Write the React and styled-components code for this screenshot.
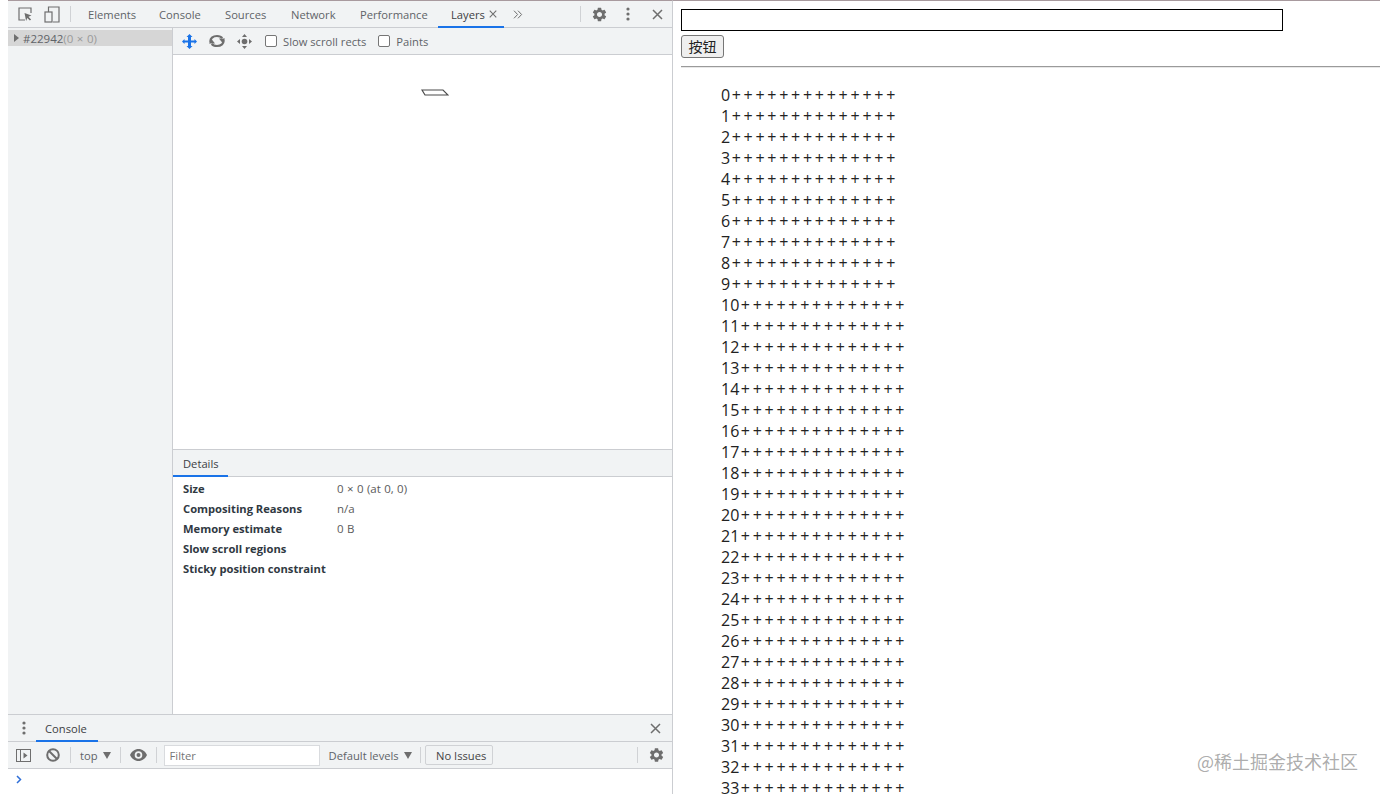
import React from "react";
import styled, { createGlobalStyle } from "styled-components";
import { MdSettings } from "react-icons/md";

const Global = createGlobalStyle`
  html, body { margin: 0; padding: 0; background: #fff; }
  body { font-family: "Open Sans", "Noto Sans", sans-serif; overflow: hidden; }
  * { box-sizing: border-box; }
`;

const Page = styled.div`
  position: relative;
  display: flex;
  width: 1380px;
  height: 794px;
  overflow: hidden;
  padding-left: 8px;
  background: #fff;
`;
const DevTools = styled.div`
  display: flex;
  flex-direction: column;
  width: 665px;
  flex: none;
  border-top: 1px solid #a89a9e;
  border-right: 1px solid #cbcdd1;
  background: #fff;
  font-size: 11.2px;
  color: #5a5a5a;
`;
const TopBar = styled.div`
  display: flex;
  align-items: center;
  height: 27px;
  flex: none;
  background: #f1f3f4;
  border-bottom: 1px solid #cbcdd1;
  padding-left: 8px;
`;
const IconSlot = styled.span`
  display: inline-flex;
  align-items: center;
  justify-content: center;
  flex: none;
  width: ${(p) => p.$w || 28}px;
  margin-left: ${(p) => p.$ml || 0}px;
  color: ${(p) => p.$color || "#6e6e6e"};
`;
const Sep = styled.span`
  flex: none;
  width: 1px;
  height: ${(p) => p.$h || 16}px;
  background: #d0d2d5;
  margin: 0 ${(p) => p.$mr ?? 6}px 0 ${(p) => p.$ml ?? 6}px;
`;
const Tab = styled.span`
  position: relative;
  display: inline-flex;
  align-items: center;
  flex: none;
  height: 100%;
  width: ${(p) => p.$w}px;
  margin-left: ${(p) => p.$ml || 0}px;
  padding-left: ${(p) => p.$pad || 0}px;
  padding-top: ${(p) => p.$pt || 0}px;
  color: ${(p) => (p.$active ? "#3c4043" : "#5f6368")};
  white-space: nowrap;
  &::after {
    content: "";
    display: ${(p) => (p.$active ? "block" : "none")};
    position: absolute;
    left: 0;
    right: 0;
    bottom: -1px;
    height: 2px;
    background: #1a73e8;
  }
`;
const Spacer = styled.span`
  flex: ${(p) => (p.$w ? `0 0 ${p.$w}px` : "1")};
`;
const Body = styled.div`
  display: flex;
  flex: 1;
  min-height: 0;
`;
const Sidebar = styled.div`
  width: 165px;
  flex: none;
  padding-top: 2px;
  background: #f1f3f4;
  border-right: 1px solid #cbcdd1;
`;
const TreeRow = styled.div`
  display: flex;
  align-items: center;
  height: 16px;
  padding-left: 6px;
  background: #d6d6d6;
  color: #5f6368;
  font-size: 11.5px;
  white-space: nowrap;
  svg { margin-right: 4px; }
`;
const Muted = styled.span`
  color: #9a9a9a;
  word-spacing: 0.6px;
`;
const Content = styled.div`
  display: flex;
  flex-direction: column;
  flex: 1;
  min-width: 0;
`;
const LayerBar = styled.div`
  display: flex;
  align-items: center;
  height: 27px;
  flex: none;
  padding-left: 2px;
  background: #f1f3f4;
  border-bottom: 1px solid #cbcdd1;
`;
const Check = styled.span`
  flex: none;
  width: 12px;
  height: 12px;
  margin-left: ${(p) => p.$ml || 0}px;
  margin-right: 6px;
  border: 1px solid #767676;
  border-radius: 2px;
  background: #fff;
`;
const CheckLabel = styled.span`
  flex: none;
  white-space: nowrap;
  color: #5f6368;
`;
const Canvas = styled.div`
  flex: 1;
  min-height: 0;
  padding: 34px 0 0 248px;
  background: #fff;
  svg { display: block; }
`;
const DetailsTabs = styled.div`
  display: flex;
  height: 28px;
  flex: none;
  background: #f1f3f4;
  border-top: 1px solid #cbcdd1;
  border-bottom: 1px solid #cbcdd1;
`;
const DetailsList = styled.div`
  display: grid;
  grid-template-columns: 154px 1fr;
  grid-auto-rows: 20px;
  align-items: center;
  height: 237px;
  flex: none;
  padding: 1px 0 0 10px;
  color: #303030;
`;
const Key = styled.span`
  font-weight: 700;
  color: #303942;
  white-space: nowrap;
`;
const Val = styled.span`
  color: #5a5a5a;
  font-size: 11.5px;
  word-spacing: 0.4px;
`;
const Drawer = styled.div`
  display: flex;
  flex-direction: column;
  flex: none;
  height: 80px;
  border-top: 1px solid #cbcdd1;
`;
const DrawerTabs = styled.div`
  display: flex;
  align-items: center;
  height: 27px;
  flex: none;
  padding-left: 3px;
  background: #f1f3f4;
  border-bottom: 1px solid #cbcdd1;
`;
const ConsoleBar = styled.div`
  display: flex;
  align-items: center;
  height: 27px;
  flex: none;
  padding-left: 1px;
  background: #f1f3f4;
  border-bottom: 1px solid #cbcdd1;
`;
const Plain = styled.span`
  flex: none;
  display: inline-flex;
  align-items: center;
  white-space: nowrap;
  color: ${(p) => p.$color || "#5f6368"};
  margin-left: ${(p) => p.$ml || 0}px;
  svg { margin-left: ${(p) => p.$gap || 5}px; }
`;
const FilterBox = styled.span`
  flex: none;
  display: flex;
  align-items: center;
  width: 156px;
  height: 21px;
  padding-left: 5px;
  background: #fff;
  border: 1px solid #d9dbde;
  color: #757575;
`;
const IssuesBtn = styled.span`
  flex: none;
  display: flex;
  align-items: center;
  justify-content: center;
  width: 68px;
  height: 20px;
  padding-left: 5px;
  border: 1px solid #d0d2d5;
  border-radius: 2px;
  color: #444;
`;
const Prompt = styled.div`
  flex: 1;
  padding: 6px 0 0 8px;
  background: #fff;
  svg { display: block; }
`;
const Site = styled.div`
  flex: 1;
  min-width: 0;
  padding: 9px 0 0 8px;
  border-top: 1px solid #a89a9e;
  color: #000;
  font-family: "Open Sans", "Noto Sans CJK SC", sans-serif;
`;
const TextInput = styled.div`
  width: 602px;
  height: 22px;
  margin-top: -1px;
  border: 1px solid #000;
  background: #fff;
`;
const PageButton = styled.button`
  display: block;
  width: 43px;
  height: 23px;
  margin-top: 4px;
  padding: 0 0 2px;
  background: #efefef;
  border: 1px solid #767676;
  border-radius: 3px;
  color: #222;
  font: 14px/1 "Noto Sans CJK SC", sans-serif;
`;
const Rule = styled.hr`
  margin: 8px 0 0;
  height: 2px;
  border: none;
  border-top: 1px solid #9a9a9a;
  border-bottom: 1px solid #e8e8e8;
`;
const List = styled.div`
  padding: 17px 0 0 40px;
`;
const Row = styled.div`
  height: 21px;
  line-height: 21px;
  font-size: 16px;
  white-space: nowrap;
  word-spacing: -1.42px;
  color: #222;
`;
const Num = styled.span`
  margin-right: 1.5px;
`;
const Watermark = styled.div`
  position: absolute;
  left: 1197px;
  top: 749px;
  font: 18px/24px "Noto Sans CJK SC", sans-serif;
  color: rgba(120, 120, 120, 0.62);
  white-space: nowrap;
`;

const Inspect = () => (
  <svg width="16" height="16" viewBox="0 0 16 16" fill="none">
    <path d="M8 14H2V2h12v5" stroke="#6e6e6e" strokeWidth="1.2" />
    <path d="M7.5 7l7 2.6-3 1.2 2.6 2.6-1.2 1.2-2.6-2.6-1.2 3z" fill="#6e6e6e" />
  </svg>
);
const Device = () => (
  <svg width="16" height="17" viewBox="0 0 16 17" fill="none" stroke="#6e6e6e" strokeWidth="1.2">
    <path d="M4.5 6V1h10.5v15H9" />
    <rect x="1" y="6" width="7" height="10" />
  </svg>
);
const Close = ({ s = 11, c = "#6e6e6e" }) => (
  <svg width={s} height={s} viewBox="0 0 11 11" stroke={c} strokeWidth="1.5">
    <path d="M1 1l9 9M10 1l-9 9" />
  </svg>
);
const Kebab = () => (
  <svg width="4" height="14" viewBox="0 0 4 14" fill="#6e6e6e">
    <circle cx="2" cy="2" r="1.6" />
    <circle cx="2" cy="7" r="1.6" />
    <circle cx="2" cy="12" r="1.6" />
  </svg>
);
const Chevrons = () => (
  <svg width="10" height="9" viewBox="0 0 10 9" fill="none" stroke="#6e6e6e" strokeWidth="1">
    <path d="M1 .7l3.6 3.8L1 8.300M5 .7l3.600 3.800L5 8.300" />
  </svg>
);
const Tri = ({ c = "#6e6e6e" }) => (
  <svg width="8" height="7" viewBox="0 0 8 7" fill={c}>
    <path d="M0 0h8L4 7z" />
  </svg>
);
const TreeTri = () => (
  <svg width="5" height="8" viewBox="0 0 5 8" fill="#6e6e6e">
    <path d="M0 0l5 4-5 4z" />
  </svg>
);
const MoveBlue = () => (
  <svg width="15" height="15" viewBox="0 0 15 15" fill="#1a73e8">
    <path d="M7.500 0l3 3H9v3.500h3.500V5l2.500 2.500L12.500 10V8.500H9V12h1.500l-3 3-3-3H6V8.500H2.500V10L0 7.500 2.500 5v1.500H6V3H4.500z" />
  </svg>
);
const Rotate = () => (
  <svg width="16" height="14" viewBox="0 0 16 14">
    <path d="M1.500 8C.8 4.500 4 2 8 2c2.500 0 4.300.8 5.200 2.200" fill="none" stroke="#6e6e6e" strokeWidth="2.200" />
    <path d="M10 4.500h6L13.500 9z" fill="#6e6e6e" />
    <path d="M14.500 6C15.200 9.500 12 12 8 12c-2.500 0-4.300-.8-5.200-2.200" fill="none" stroke="#6e6e6e" strokeWidth="2.200" />
    <path d="M6 9.500H0L2.500 5z" fill="#6e6e6e" />
  </svg>
);
const Pan = () => (
  <svg width="15" height="15" viewBox="0 0 15 15" fill="#6e6e6e">
    <path d="M7.500 0l2.500 3H5zM7.500 15L5 12h5zM0 7.500L3 5v5zM15 7.500L12 10V5z" />
    <circle cx="7.500" cy="7.500" r="2.800" />
  </svg>
);
const SidebarToggle = () => (
  <svg width="15" height="13" viewBox="0 0 15 13" fill="none" stroke="#6e6e6e">
    <rect x=".5" y=".5" width="14" height="12" />
    <path d="M4.500 .5v12" />
    <path d="M7.500 3.500l4 3-4 3z" fill="#6e6e6e" stroke="none" />
  </svg>
);
const Block = () => (
  <svg width="14" height="14" viewBox="0 0 14 14" fill="none" stroke="#6e6e6e" strokeWidth="2">
    <circle cx="7" cy="7" r="5.800" />
    <path d="M3 3l8 8" />
  </svg>
);
const Eye = () => (
  <svg width="17" height="12" viewBox="0 0 17 12" fill="#6e6e6e">
    <path d="M8.500 0C4.800 0 1.600 2.400 0 6c1.600 3.600 4.800 6 8.500 6S15.400 9.600 17 6C15.400 2.400 12.200 0 8.500 0zm0 9.800a3.800 3.800 0 110-7.600 3.800 3.800 0 010 7.600zM8.500 4a2 2 0 100 4 2 2 0 000-4z" />
  </svg>
);
const PromptIcon = () => (
  <svg width="6" height="9" viewBox="0 0 6 9" fill="none" stroke="#2f6fd8" strokeWidth="1.500">
    <path d="M1 1l3.500 3.500L1 8" />
  </svg>
);
const LayerShape = () => (
  <svg width="28" height="8" viewBox="0 0 28 8" fill="#fff" stroke="#4a4a4a" strokeWidth="1.200">
    <path d="M1 1h21l5 5H4z" />
  </svg>
);

const details = [
  ["Size", "0 × 0 (at 0, 0)"],
  ["Compositing Reasons", "n/a"],
  ["Memory estimate", "0 B"],
  ["Slow scroll regions", ""],
  ["Sticky position constraint", ""],
];
const pluses = Array(14).fill("+").join(" ");
const rows = Array.from({ length: 34 }, (_, i) => i);

export default function App() {
  return (
    <Page>
      <Global />
      <DevTools>
        <TopBar>
          <IconSlot $w={16} $ml={1}><Inspect /></IconSlot>
          <IconSlot $w={16} $ml={11}><Device /></IconSlot>
          <Sep $ml={10} $mr={17} />
          <Tab $w={71}>Elements</Tab>
          <Tab $w={66}>Console</Tab>
          <Tab $w={66}>Sources</Tab>
          <Tab $w={69}>Network</Tab>
          <Tab $w={78}>Performance</Tab>
          <Tab $w={66} $active $pad={13}>
            Layers
            <IconSlot $w={9} $ml={4}><Close s={8} /></IconSlot>
          </Tab>
          <IconSlot $w={10} $ml={9}><Chevrons /></IconSlot>
          <Spacer />
          <Sep $ml={0} $mr={10} />
          <IconSlot $w={17}><MdSettings size={19} color="#6e6e6e" /></IconSlot>
          <IconSlot $w={4} $ml={18}><Kebab /></IconSlot>
          <IconSlot $w={11} $ml={22}><Close /></IconSlot>
          <Spacer $w={9} />
        </TopBar>
        <Body>
          <Sidebar>
            <TreeRow>
              <TreeTri />
              #22942<Muted>(0 × 0)</Muted>
            </TreeRow>
          </Sidebar>
          <Content>
            <LayerBar>
              <IconSlot $w={28}><MoveBlue /></IconSlot>
              <IconSlot $w={28}><Rotate /></IconSlot>
              <IconSlot $w={26}><Pan /></IconSlot>
              <Check $ml={8} />
              <CheckLabel>Slow scroll rects</CheckLabel>
              <Check $ml={12} />
              <CheckLabel>Paints</CheckLabel>
            </LayerBar>
            <Canvas><LayerShape /></Canvas>
            <DetailsTabs>
              <Tab $w={55} $active $pad={10} $pt={1}>Details</Tab>
            </DetailsTabs>
            <DetailsList>
              {details.map(([k, v]) => (
                <React.Fragment key={k}>
                  <Key>{k}</Key>
                  <Val>{v}</Val>
                </React.Fragment>
              ))}
            </DetailsList>
          </Content>
        </Body>
        <Drawer>
          <DrawerTabs>
            <IconSlot $w={4} $ml={11}><Kebab /></IconSlot>
            <Tab $w={62} $active $pad={9} $ml={10}>Console</Tab>
            <Spacer />
            <IconSlot $w={11}><Close /></IconSlot>
            <Spacer $w={11} />
          </DrawerTabs>
          <ConsoleBar>
            <IconSlot $w={15} $ml={7}><SidebarToggle /></IconSlot>
            <IconSlot $w={14} $ml={15}><Block /></IconSlot>
            <Sep $ml={10} $mr={9} />
            <Plain $gap={5}>top<Tri /></Plain>
            <Sep $ml={9} $mr={9} />
            <IconSlot $w={17}><Eye /></IconSlot>
            <Sep $ml={9} $mr={7} />
            <FilterBox>Filter</FilterBox>
            <Plain $ml={9} $gap={5}>Default levels<Tri /></Plain>
            <Sep $ml={8} $mr={4} />
            <IssuesBtn>No Issues</IssuesBtn>
            <Spacer />
            <Sep $ml={0} $mr={10} />
            <IconSlot $w={17}><MdSettings size={18} color="#6e6e6e" /></IconSlot>
            <Spacer $w={7} />
          </ConsoleBar>
          <Prompt><PromptIcon /></Prompt>
        </Drawer>
      </DevTools>
      <Site>
        <TextInput />
        <PageButton>按钮</PageButton>
        <Rule />
        <List>
          {rows.map((i) => (
            <Row key={i}><Num>{i}</Num>{pluses}</Row>
          ))}
        </List>
      </Site>
      <Watermark>@稀土掘金技术社区</Watermark>
    </Page>
  );
}
